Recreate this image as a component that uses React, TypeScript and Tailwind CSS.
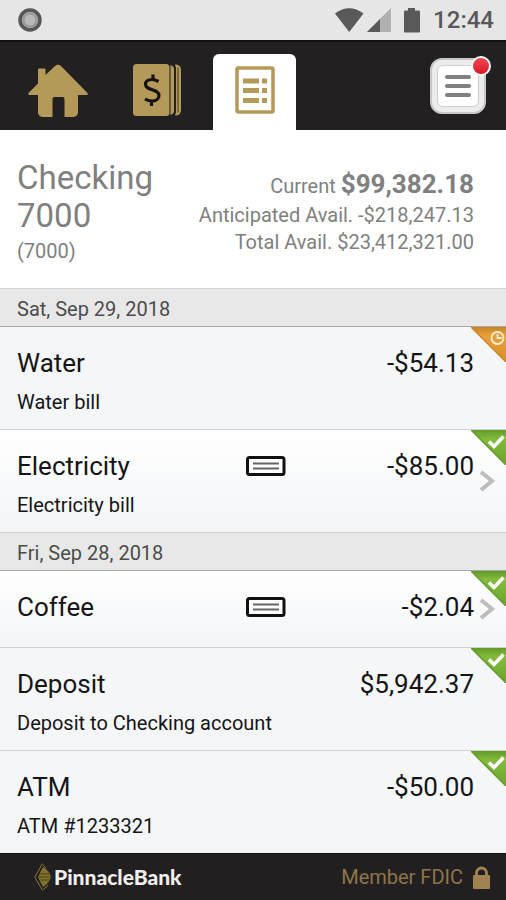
import { clsx } from 'clsx';

type Status = 'pending' | 'cleared';

interface Transaction {
  id: number;
  title: string;
  memo?: string;
  amount: string;
  status: Status;
  hasCheck?: boolean;
}

interface Day {
  label: string;
  items: Transaction[];
}

const days: Day[] = [
  {
    label: 'Sat, Sep 29, 2018',
    items: [
      { id: 1, title: 'Water', memo: 'Water bill', amount: '-$54.13', status: 'pending' },
      {
        id: 2,
        title: 'Electricity',
        memo: 'Electricity bill',
        amount: '-$85.00',
        status: 'cleared',
        hasCheck: true,
      },
    ],
  },
  {
    label: 'Fri, Sep 28, 2018',
    items: [
      { id: 3, title: 'Coffee', amount: '-$2.04', status: 'cleared', hasCheck: true },
      {
        id: 4,
        title: 'Deposit',
        memo: 'Deposit to Checking account',
        amount: '$5,942.37',
        status: 'cleared',
      },
      { id: 5, title: 'ATM', memo: 'ATM #1233321', amount: '-$50.00', status: 'cleared' },
    ],
  },
];

function StatusBar() {
  return (
    <div className="flex h-10 items-center bg-[#e6e6e6] pr-3 pl-[18px] text-[#595959]">
      <svg width="24" height="24" viewBox="0 0 24 24" aria-hidden="true">
        <circle cx="12" cy="12" r="10" fill="#a9a9a9" stroke="#565656" strokeWidth="3.5" />
        <circle cx="12" cy="12" r="6.5" fill="#b8b8b8" stroke="#989898" strokeWidth="2" />
      </svg>
      <svg className="ml-auto" width="30" height="24" viewBox="0 0 30 24" aria-hidden="true">
        <path d="M1 5.500Q15 -5 29.500 5.500L15.200 24z" fill="currentColor" />
      </svg>
      <svg className="ml-[3px]" width="24" height="24" viewBox="0 0 24 24" aria-hidden="true">
        <path d="M24 0v24H0z" fill="#b0b0b0" />
        <path d="M13 11v13H0z" fill="currentColor" />
      </svg>
      <svg className="ml-3" width="18" height="25" viewBox="0 0 18 25" aria-hidden="true">
        <path
          d="M5 0h7v2.500h4q1 0 1 1.500v19.500q0 1-1 1H2q-1 0-1-1V4q0-1.500 1-1.500h3z"
          fill="currentColor"
        />
      </svg>
      <span className="ml-3 text-2xl font-medium">12:44</span>
    </div>
  );
}

function HomeIcon() {
  return (
    <svg width="60" height="54" viewBox="0 0 60 54" fill="#b49a58" aria-hidden="true">
      <path d="M10 5.500q0-1 1-1h5.500q1 0 1 1v5.500L27 2q3-2.500 6 0L59.500 29q1 2-1 2H50v18q-1 4-5 4h-8.500V35q0-2-2-2h-8q-2 0-2 2v18H15q-4 0-5-4V31H1.500q-2 0-1-2l9.500-9.500z" />
    </svg>
  );
}

function DepositIcon() {
  return (
    <svg width="49" height="52" viewBox="0 0 49 52" aria-hidden="true">
      <rect x="1" width="36.500" height="52" rx="3.500" fill="#b49a58" />
      <path d="M38.500 1q3.500 1 3.500 4.500v41q0 3.500-3.500 4.500z" fill="#b49a58" />
      <path d="M43 .5q6 0 6 5.500v40q0 5.500-6 5.500l1-3V4z" fill="#b49a58" />
      <path d="M46 3.500v45" stroke="#232021" strokeWidth=".8" />
      <path
        d="M26.500 17.500q-3.500-2-6.500-2c-4 0-6.500 2-6.500 4.800 0 6.700 13.500 4.200 13.500 11.200 0 3.200-3 5.500-7 5.500q-4 0-7-2M21 10.500v5M19.500 37v5"
        fill="none"
        stroke="#151212"
        strokeWidth="3.200"
      />
    </svg>
  );
}

function LedgerIcon() {
  return (
    <svg width="40" height="48" viewBox="0 0 40 48" fill="#b49a58" aria-hidden="true">
      <rect x="2" y="2" width="36" height="44" rx="1.500" fill="none" stroke="#b49a58" strokeWidth="3.500" />
      <path d="M8 12.500h16v5H8zM27 12.500h5v5h-5zM8 22h16v5H8zM27 22h5v5h-5zM8 32h16v5H8zM27 32h5v5h-5z" />
    </svg>
  );
}

function NavBar() {
  return (
    <nav className="flex h-[90px] items-end border-t-2 border-[#111] bg-[#232021] pr-5 pl-7">
      <button type="button" aria-label="Home" className="mb-3">
        <HomeIcon />
      </button>
      <button type="button" aria-label="Deposits" className="mb-[14px] ml-11">
        <DepositIcon />
      </button>
      <button
        type="button"
        aria-label="Register"
        className="ml-8 flex h-19 w-[83px] justify-center rounded-t-md bg-white pt-3"
      >
        <LedgerIcon />
      </button>
      <button
        type="button"
        aria-label="Menu"
        className="relative mb-4 ml-auto flex size-14 items-center justify-center rounded-xl border-2 border-[#c8c8c8] bg-[#ececec]"
      >
        <span className="flex size-[42px] flex-col items-center justify-center gap-[5px] rounded-md border border-[#cfcfcf] bg-white">
          <span className="h-1 w-[26px] rounded-full bg-[#808080]" />
          <span className="h-1 w-[26px] rounded-full bg-[#808080]" />
          <span className="h-1 w-[26px] rounded-full bg-[#808080]" />
        </span>
        <span className="absolute -top-1 -right-[7px] size-5 rounded-full border-2 border-white bg-linear-to-b from-[#f24450] to-[#dd1224]" />
      </button>
    </nav>
  );
}

function AccountSummary() {
  return (
    <section className="flex justify-between pt-[29px] pr-8 pb-5 pl-[17px] text-[#808080]">
      <div>
        <h1 className="w-36 text-[33px] leading-[38px]">Checking 7000</h1>
        <p className="text-xl leading-[33px]">(7000)</p>
      </div>
      <div className="pt-[9px] text-right text-xl leading-[27px]">
        <p className="leading-8">
          Current <strong className="text-[26px] font-bold">$99,382.18</strong>
        </p>
        <p>Anticipated Avail. -$218,247.13</p>
        <p>Total Avail. $23,412,321.00</p>
      </div>
    </section>
  );
}

function Ribbon({ status, id }: { status: Status; id: number }) {
  const pending = status === 'pending';
  const fillId = `ribbon-${id}`;
  return (
    <svg
      className="absolute top-0 right-0"
      width="35"
      height="35"
      viewBox="0 0 35 35"
      role="img"
      aria-label={pending ? 'Pending' : 'Cleared'}
    >
      <defs>
        <linearGradient id={fillId} x1="0" y1="0" x2="0" y2="1">
          <stop offset="0" stopColor={pending ? '#c98525' : '#629a28'} />
          <stop offset=".25" stopColor={pending ? '#e9a03a' : '#82bb3c'} />
          <stop offset="1" stopColor={pending ? '#d98e2a' : '#6aa52c'} />
        </linearGradient>
      </defs>
      <path d="M0 0h35v35z" fill={`url(#${fillId})`} />
      <path d="M0 0l35 35" fill="none" stroke={pending ? '#c98728' : '#649a2b'} strokeWidth="1.500" />
      {pending ? (
        <g fill="none" stroke="#fff0cf" strokeWidth="1.800">
          <circle cx="26.500" cy="11" r="6" />
          <path d="M26.500 7v4h4" />
        </g>
      ) : (
        <path d="M18 11.500l5 5L32.500 6.500" fill="none" stroke="#fff" strokeWidth="3.600" />
      )}
    </svg>
  );
}

function CheckIcon() {
  return (
    <svg
      className="shrink-0"
      width="40"
      height="20"
      viewBox="0 0 40 20"
      role="img"
      aria-label="Check image"
    >
      <rect x="1.500" y="1.500" width="36.500" height="17" rx="2" fill="#fff" stroke="#111" strokeWidth="3" />
      <path d="M7 7.500h26M7 12.500h26" stroke="#666" strokeWidth="2" />
    </svg>
  );
}

function TransactionRow({ item }: { item: Transaction }) {
  const body = (
    <>
      <div className="min-w-0 flex-1 pt-5 pb-[15px]">
        <div className="flex items-center">
          <h3 className="w-1/2 text-[26px] leading-8">{item.title}</h3>
          {item.hasCheck && <CheckIcon />}
          <span className="ml-auto text-[26px] leading-8">{item.amount}</span>
        </div>
        {item.memo && <p className="mt-[11px] text-xl leading-6">{item.memo}</p>}
      </div>
      <div className="flex w-8 shrink-0 items-center pl-[6px]">
        {item.hasCheck && (
          <svg width="16" height="22" viewBox="0 0 16 22" aria-hidden="true">
            <path d="M1 2L12 11L1 20" fill="none" stroke="#bdbdbd" strokeWidth="4" />
          </svg>
        )}
      </div>
      <Ribbon status={item.status} id={item.id} />
    </>
  );
  const base = 'relative flex min-h-[76px] pl-[17px]';

  return (
    <li className="border-b border-[#d0d2d3] last:border-b-0">
      {item.hasCheck ? (
        <a href={`#transaction-${item.id}`} className={clsx(base, 'bg-linear-to-b from-white to-[#f3f5f7]')}>
          {body}
        </a>
      ) : (
        <div className={clsx(base, 'bg-[#f4f6f8]')}>{body}</div>
      )}
    </li>
  );
}

function Footer() {
  return (
    <footer className="flex h-[47px] items-center border-t border-[#111] bg-[#211f20] pr-4 pl-[34px]">
      <div className="flex items-center">
        <svg width="18" height="28" viewBox="0 0 18 28" fill="none" stroke="#8d7a3d" aria-hidden="true">
          <path d="M8.500 .5L.8 14L8.500 27.500" />
          <path d="M9 4Q15.500 8 17 14Q15.500 20 9 24L4 14z" fill="#82722f" stroke="none" />
          <path d="M6.500 11h9M5 14h12M6.500 17h9" stroke="#4a411f" />
          <path d="M9 1.500l3 4M9 26.500l5-4" />
        </svg>
        <span className="ml-[2px] font-[Lato,sans-serif] text-[21px] leading-7 font-black text-[#f1eeee]">
          PinnacleBank
        </span>
      </div>
      <span className="ml-auto text-xl text-[#8f7549]">Member FDIC</span>
      <svg className="ml-[10px]" width="17" height="23" viewBox="0 0 17 23" aria-hidden="true">
        <path d="M3.500 10V7a5 5 0 0 1 10 0v3" fill="none" stroke="#a08351" strokeWidth="2.800" />
        <rect y="9" width="17" height="14" rx="1" fill="#a08351" />
      </svg>
    </footer>
  );
}

export default function App() {
  return (
    <div className="flex min-h-screen flex-col bg-white font-[Roboto,sans-serif] text-[#151515]">
      <StatusBar />
      <NavBar />
      <main className="flex-1">
        <AccountSummary />
        {days.map((day) => (
          <section key={day.label}>
            <h2 className="border-t border-b border-t-[#d3d3d3] border-b-[#a4a9ae] bg-[#e8e8e8] pt-1 pl-[17px] text-xl leading-[33px] text-[#4c4c4c]">
              {day.label}
            </h2>
            <ul>
              {day.items.map((item) => (
                <TransactionRow key={item.id} item={item} />
              ))}
            </ul>
          </section>
        ))}
      </main>
      <Footer />
    </div>
  );
}
